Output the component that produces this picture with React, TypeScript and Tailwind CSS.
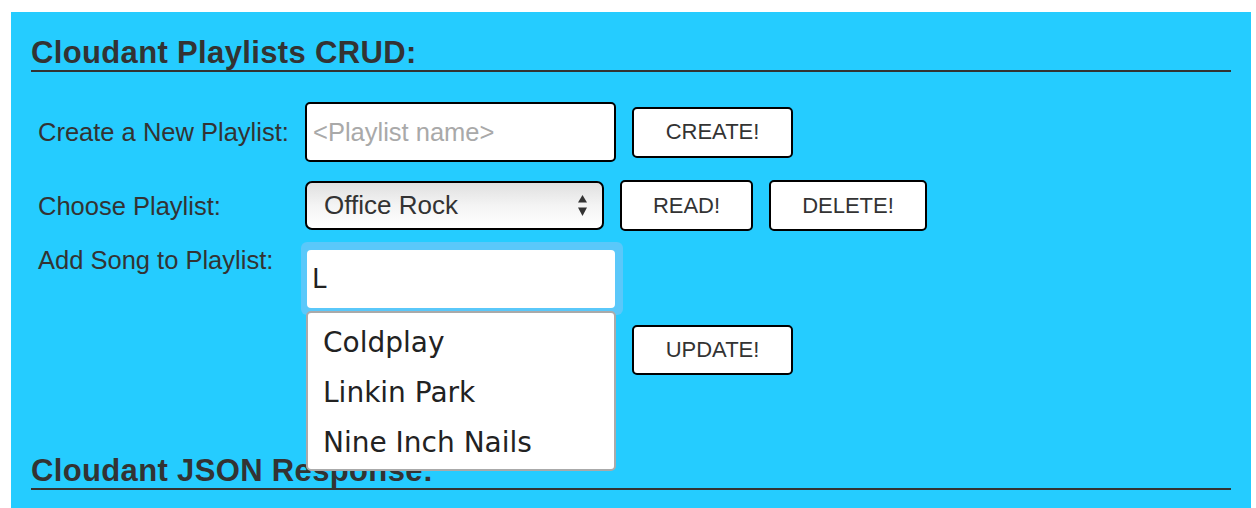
export default function App() {
  const btn =
    "flex items-center justify-center rounded-[5px] border-2 border-black bg-white text-[22px] leading-none text-[#333]";
  return (
    <div className="h-[508px] w-[1256px] overflow-hidden bg-white pl-[11px] pr-[5px] pt-[12px] font-['Liberation_Sans',Arial,sans-serif]">
      <div className="h-full bg-[#25ccff] px-[20px] pt-[24px] text-[#333]">
        <h1 className="border-b-2 border-[#333] text-[31px] font-bold leading-[34px] tracking-[0.35px]">
          Cloudant Playlists CRUD:
        </h1>

        {/* Row 1 */}
        <div className="mt-[30px] flex items-center">
          <div className="w-[274px] pl-[7px] text-[25.5px] leading-[30px]">Create a New Playlist:</div>
          <div className="flex h-[60px] w-[311px] items-center rounded-[5px] border-2 border-black bg-white pl-[6px] text-[25.5px] text-[#a9a9a9]">
            &lt;Playlist name&gt;
          </div>
          <div className={`${btn} ml-[16px] h-[51px] w-[161px]`}>CREATE!</div>
        </div>

        {/* Row 2 */}
        <div className="mt-[18px] flex h-[51px] items-center">
          <div className="w-[274px] pl-[7px] text-[25.5px] leading-[30px]">Choose Playlist:</div>
          <div className="flex h-[49px] w-[299px] items-center justify-between rounded-[7px] border-2 border-black bg-gradient-to-b from-[#e0e0e0] via-[#f4f4f4] to-white pl-[17px] pr-[15px] text-[26px] text-[#333]">
            <span>Office Rock</span>
            <svg width="9" height="21" viewBox="0 0 9 21">
              <polygon points="4.5,0 9,7.5 0,7.5" fill="#333" />
              <polygon points="0,12.5 9,12.5 4.5,21" fill="#333" />
            </svg>
          </div>
          <div className={`${btn} ml-[16px] h-[51px] w-[133px]`}>READ!</div>
          <div className={`${btn} ml-[16px] h-[51px] w-[158px]`}>DELETE!</div>
        </div>

        {/* Row 3 */}
        <div className="mt-[11px] flex items-start">
          <div className="mt-[3px] w-[274px] pl-[7px] text-[25.5px] leading-[30px]">Add Song to Playlist:</div>
          <div className="relative -ml-[4px] rounded-[6px] bg-[#5ac8fa] pb-[7px] pl-[6px] pr-[8px] pt-[8px]">
            <div className="flex h-[58px] w-[308px] items-center rounded-[4px] bg-white pl-[5px] font-['DejaVu_Sans',Verdana,sans-serif] text-[26px] text-[#222]">
              L
            </div>
            <div className="absolute left-[5px] top-[69px] z-10 w-[310px] rounded-[5px] border-2 border-[#aaa] bg-white pb-[1px] pt-[5px] font-['DejaVu_Sans',Verdana,sans-serif] text-[28px] text-[#222]">
              <div className="flex h-[50px] items-center pl-[15px]">Coldplay</div>
              <div className="flex h-[50px] items-center pl-[15px]">Linkin Park</div>
              <div className="flex h-[50px] items-center pl-[15px]">Nine Inch Nails</div>
            </div>
          </div>
        </div>

        {/* Row 4 */}
        <div className="mt-[10px] flex pl-[601px]">
          <div className={`${btn} h-[50px] w-[161px]`}>UPDATE!</div>
        </div>

        <h2 className="mt-[79px] border-b-2 border-[#333] text-[31px] font-bold leading-[34px] tracking-[0.35px]">
          Cloudant JSON Response:
        </h2>
      </div>
    </div>
  );
}
